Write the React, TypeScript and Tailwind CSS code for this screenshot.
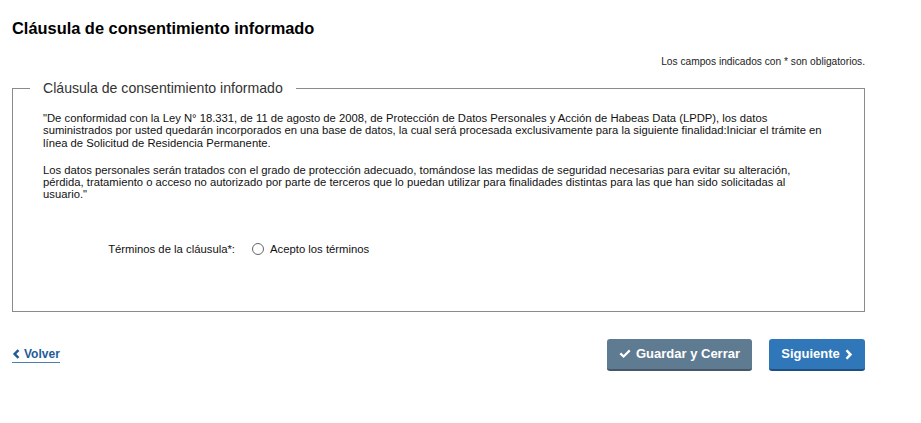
export default function App() {
  return (
    <div className="min-h-[423px] w-full bg-white font-['Liberation_Sans',Arial,sans-serif] text-[#222]">
      <div className="w-[865px] pl-[12px]">
        <h1 className="pt-[18px] text-[16.4px] font-bold leading-[20px] text-black">
          Cláusula de consentimiento informado
        </h1>
        <p className="mt-[17px] text-right text-[10.2px] leading-[13px] text-[#222]">
          Los campos indicados con * son obligatorios.
        </p>

        <fieldset className="mt-[12px] h-[232px] border border-[#8a8a8a] pl-[30px]">
          <legend className="ml-[-13px] px-[13px] text-[14.1px] leading-[16px] text-[#333]">
            Cláusula de consentimiento informado
          </legend>
          <div className="mt-[16px] whitespace-nowrap text-[11.25px] leading-[12.3px] text-[#111]">
            <p>
              "De conformidad con la Ley N° 18.331, de 11 de agosto de 2008, de Protección de Datos Personales y Acción de Habeas Data (LPDP), los datos
              <br />
              suministrados por usted quedarán incorporados en una base de datos, la cual será procesada exclusivamente para la siguiente finalidad:Iniciar el trámite en
              <br />
              línea de Solicitud de Residencia Permanente.
            </p>
            <p className="mt-[15px]">
              Los datos personales serán tratados con el grado de protección adecuado, tomándose las medidas de seguridad necesarias para evitar su alteración,
              <br />
              pérdida, tratamiento o acceso no autorizado por parte de terceros que lo puedan utilizar para finalidades distintas para las que han sido solicitadas al
              <br />
              usuario."
            </p>
          </div>
          <div className="mt-[41px] flex items-center text-[11.3px] leading-[14px] text-[#111]">
            <span className="w-[192px] text-right">Términos de la cláusula*:</span>
            <label className="ml-[17px] flex items-center gap-[6px]">
              <span className="h-[12px] w-[12px] rounded-full border border-[#666] bg-white" />
              <span>Acepto los términos</span>
            </label>
          </div>
        </fieldset>

        <div className="mt-[27px] flex items-center justify-between">
          <a href="#" className="flex items-center gap-[4px] border-b border-[#4a7fb5] pb-[1px] text-[12px] font-bold leading-[13px] text-[#1f5c99]">
            <svg width="8" height="10" viewBox="0 0 8 10" className="fill-current">
              <path d="M5.6 0.3 7.4 1.9 4.3 5 7.4 8.1 5.6 9.7 0.9 5Z" />
            </svg>
            Volver
          </a>
          <div className="flex gap-[17px]">
            <button className="flex h-[32px] w-[145px] items-center justify-center gap-[5px] rounded-[3px] border-b-2 border-[#44586a] bg-[#5f7b92] text-[13px] font-bold text-white">
              <svg width="12" height="10" viewBox="0 0 12 10" className="fill-current">
                <path d="M0.5 5.2 2.1 3.6 4.6 6 10 0.6 11.5 2.2 4.6 9.1Z" />
              </svg>
              Guardar y Cerrar
            </button>
            <button className="flex h-[32px] w-[96px] items-center justify-center gap-[5px] rounded-[3px] border-b-2 border-[#1d4f80] bg-[#2f77b9] text-[13px] font-bold text-white">
              Siguiente
              <svg width="8" height="11" viewBox="0 0 8 11" className="fill-current">
                <path d="M2.4 0.4 0.6 2 3.7 5.5 0.6 9 2.4 10.6 7.2 5.5Z" />
              </svg>
            </button>
          </div>
        </div>
      </div>
    </div>
  );
}
